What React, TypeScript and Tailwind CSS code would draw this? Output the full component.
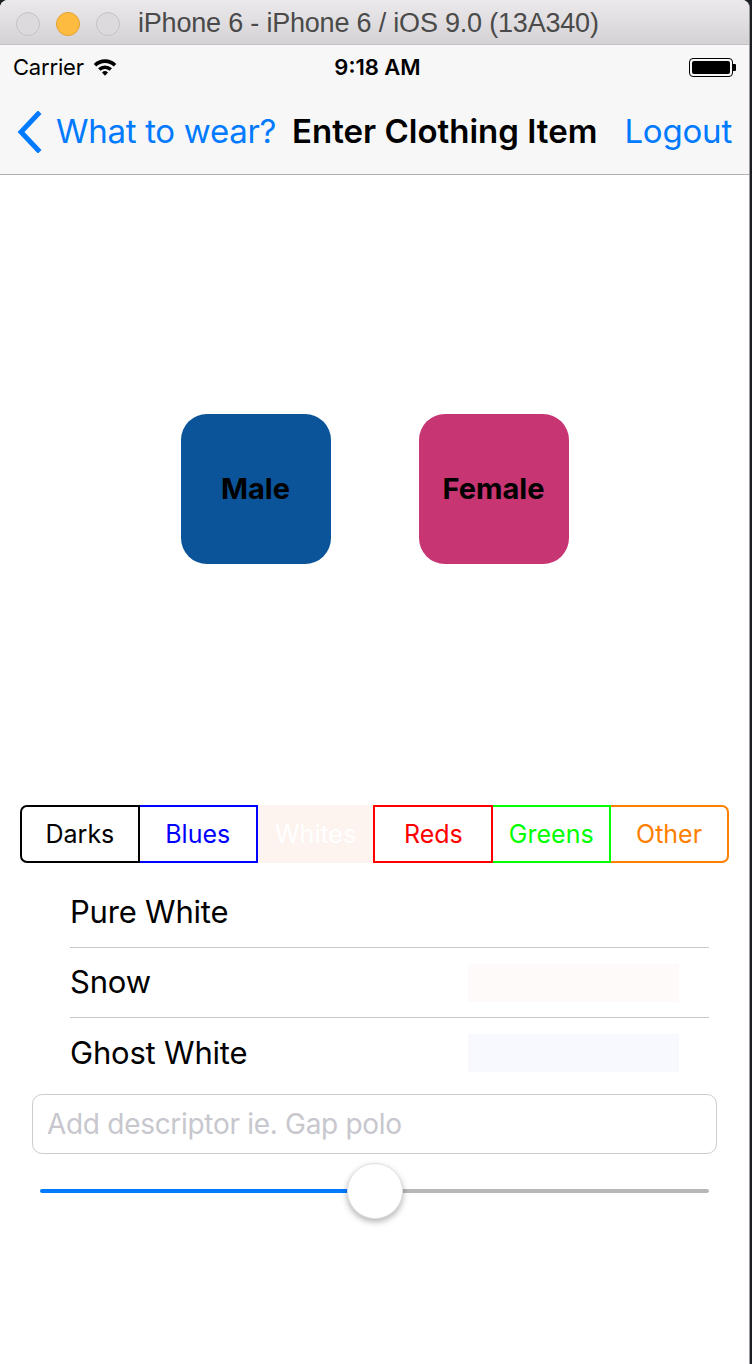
import React from 'react';

const segments = [
  { label: 'Darks', cls: 'border-y-2 border-x-2 border-black text-black rounded-l-[7px]' },
  { label: 'Blues', cls: 'border-y-2 border-r-2 border-[#0000ff] text-[#0000ff]' },
  { label: 'Whites', cls: 'bg-[#fdf3ef] text-white' },
  { label: 'Reds', cls: 'border-y-2 border-x-2 border-[#ff0000] text-[#ff0000]' },
  { label: 'Greens', cls: 'border-y-2 border-r-2 border-[#00ff00] text-[#00ff00]' },
  { label: 'Other', cls: 'border-y-2 border-r-2 border-[#ff8000] text-[#ff8000] rounded-r-[7px]' },
];

const rows = [
  { name: 'Pure White', swatch: '' },
  { name: 'Snow', swatch: 'bg-[#fffafa]' },
  { name: 'Ghost White', swatch: 'bg-[#f8f8ff]' },
];

function Wifi() {
  return (
    <svg width="26" height="20" viewBox="0 0 20 16">
      <path d="M1 5.5 A13 13 0 0 1 19 5.5 L17 7.6 A10 10 0 0 0 3 7.6 Z" fill="#000" />
      <path d="M4.4 9 A8.2 8.2 0 0 1 15.6 9 L13.6 11 A5.4 5.4 0 0 0 6.4 11 Z" fill="#000" />
      <path d="M7.6 12.3 A3.6 3.6 0 0 1 12.4 12.3 L10 15 Z" fill="#000" />
    </svg>
  );
}

function Battery() {
  return (
    <div className="flex items-center">
      <div className="w-[44px] h-[19px] rounded-[4px] border border-black p-[2px]">
        <div className="w-full h-full rounded-[2px] bg-black" />
      </div>
      <div className="w-[3px] h-[7px] bg-black rounded-r-[1px]" />
    </div>
  );
}

export default function App() {
  return (
    <div className="w-[752px] h-[1364px] bg-[#1b1f24] flex overflow-hidden" style={{ fontFamily: 'Inter, "Liberation Sans", sans-serif' }}>
      <div className="w-[750px] h-full bg-white flex flex-col border-r border-[#9a9a9a] rounded-t-[8px] overflow-hidden">
        {/* window title bar */}
        <div className="h-[45px] shrink-0 bg-gradient-to-b from-[#ebe9eb] to-[#d4d2d4] border-b border-[#c3c1c3] flex items-center pl-[16px] pt-[3px]">
          <div className="flex gap-[16px]">
            <div className="w-[24px] h-[24px] rounded-full bg-[#dcdadc] border border-[#c4c2c4]" />
            <div className="w-[24px] h-[24px] rounded-full bg-[#fdbc40] border border-[#e2a12e]" />
            <div className="w-[24px] h-[24px] rounded-full bg-[#dcdadc] border border-[#c4c2c4]" />
          </div>
          <span className="ml-[18px] text-[27px] text-[#4a4a4a] tracking-[-0.2px]" style={{ fontFamily: '"Liberation Sans", Arial, sans-serif' }}>
            iPhone 6 - iPhone 6 / iOS 9.0 (13A340)
          </span>
        </div>

        {/* status + nav bar */}
        <div className="shrink-0 bg-[#f7f7f7] border-b border-[#b2b2b2]">
          <div className="h-[44px] relative flex items-center justify-between pl-[13px] pr-[13px]">
            <div className="flex items-center gap-[8px]">
              <span className="text-[22px] text-black tracking-[-0.2px]">Carrier</span>
              <Wifi />
            </div>
            <span className="absolute left-0 right-0 text-center text-[22px] font-semibold text-black pl-[6px]">9:18 AM</span>
            <Battery />
          </div>
          <div className="h-[85px] flex items-center pl-[16px] pr-[17px]">
            <svg width="26" height="42" viewBox="0 0 26 42" className="mr-[14px]">
              <path d="M22 3 L5 21 L22 39" fill="none" stroke="#007aff" strokeWidth="5" strokeLinecap="square" />
            </svg>
            <span className="text-[33px] text-[#007aff] tracking-[-0.3px]">What to wear?</span>
            <span className="ml-[16px] text-[33px] font-semibold text-black">Enter Clothing Item</span>
            <span className="ml-auto text-[33px] text-[#007aff] tracking-[-0.2px]">Logout</span>
          </div>
        </div>

        {/* gender buttons */}
        <div className="h-[630px] shrink-0 flex items-center justify-center gap-[88px] pb-[2px]">
          <button className="w-[150px] h-[150px] rounded-[26px] bg-[#0b5499] text-[29px] font-bold text-black">Male</button>
          <button className="w-[150px] h-[150px] rounded-[26px] bg-[#c73572] text-[29px] font-bold text-black">Female</button>
        </div>

        {/* segmented colours */}
        <div className="px-[20px] flex">
          {segments.map((s) => (
            <div
              key={s.label}
              className={`flex-1 h-[58px] flex items-center justify-center text-[25px] pt-[2px] ${s.cls}`}
            >
              {s.label}
            </div>
          ))}
        </div>

        {/* colour list */}
        <div className="pl-[70px] pr-[40px] mt-[15px]">
          {rows.map((r, i) => (
            <div key={r.name} className={`h-[70px] flex items-center ${i < rows.length - 1 ? 'border-b border-[#c8c7cc]' : ''}`}>
              <span className="text-[31px] text-black tracking-[-0.2px]">{r.name}</span>
              {r.swatch && <div className={`ml-auto mr-[30px] w-[211px] h-[38px] ${r.swatch}`} />}
            </div>
          ))}
        </div>

        {/* descriptor field */}
        <div className="px-[32px] mt-[6px]">
          <div className="h-[60px] rounded-[10px] border border-[#cccccc] flex items-center px-[14px]">
            <span className="text-[28px] text-[#c7c7cd] tracking-[-0.3px]">Add descriptor ie. Gap polo</span>
          </div>
        </div>

        {/* slider */}
        <div className="px-[40px] mt-[6px] h-[62px] flex items-center">
          <div className="flex-1 flex items-center">
            <div className="w-[335px] h-[4px] bg-[#007aff] rounded-l-full" />
            <div className="w-[56px] h-[56px] -mx-[28px] rounded-full bg-white border border-[#e0e0e0] shadow-[0_3px_6px_rgba(0,0,0,0.3)] relative" />
            <div className="flex-1 h-[4px] bg-[#b7b7b7] rounded-r-full" />
          </div>
        </div>
      </div>
    </div>
  );
}
